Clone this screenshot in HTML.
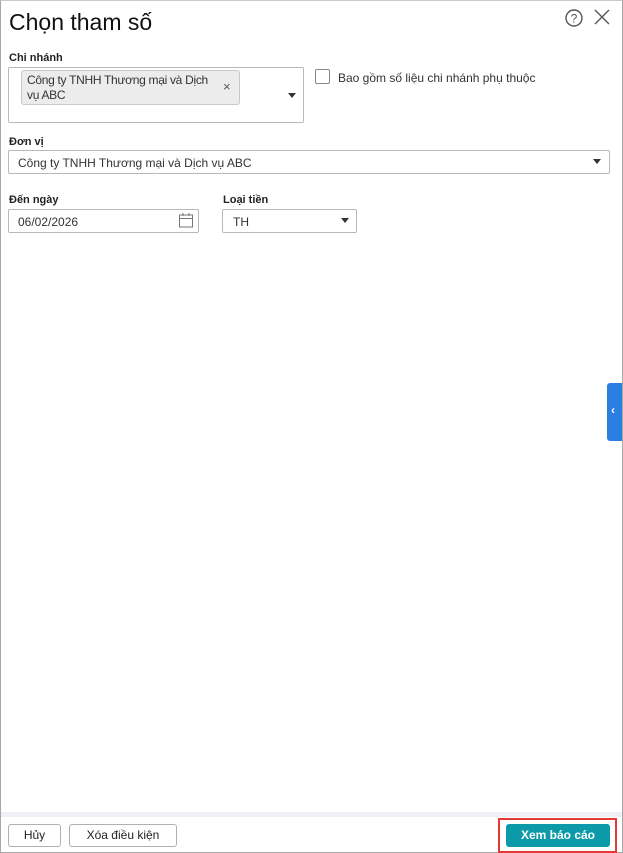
<!DOCTYPE html>
<html><head><meta charset="utf-8"><style>
*{box-sizing:border-box;margin:0;padding:0}
body{width:623px;height:853px;background:#fff;font-family:"Liberation Sans",sans-serif;color:#212121;position:relative;overflow:hidden}
.frame{position:absolute;left:0;top:0;width:623px;height:853px;border:1px solid #a8a8a8;border-top-color:#c8c8c8}
.abs{position:absolute}
h1{position:absolute;left:9px;top:9px;font-size:23px;font-weight:normal;color:#111}
.lbl{position:absolute;font-size:11px;font-weight:bold;color:#222}
.box{position:absolute;border:1px solid #b8b8b8;border-radius:2px;background:#fff}
.arrow{position:absolute;width:0;height:0;border-left:4px solid transparent;border-right:4px solid transparent;border-top:5px solid #333}
.txt{position:absolute;font-size:12px;color:#333;white-space:nowrap}
.btn{position:absolute;border:1px solid #b0b0b0;border-radius:3px;background:#fff;font-size:12px;text-align:center;line-height:21px;color:#222}
</style></head><body>
<div class="frame"></div>
<h1>Chọn tham số</h1>
<svg class="abs" style="left:564px;top:8px" width="20" height="20"><circle cx="10" cy="10" r="8" fill="none" stroke="#555" stroke-width="1.4"/><text x="10" y="14.5" font-size="12" text-anchor="middle" fill="#555" font-family="Liberation Sans">?</text></svg>
<svg class="abs" style="left:593px;top:8px" width="18" height="18"><path d="M2 2L16 16M16 2L2 16" stroke="#555" stroke-width="1.4"/></svg>

<div class="lbl" style="left:9px;top:52px">Chi nhánh</div>
<div class="box" style="left:8px;top:67px;width:296px;height:56px"></div>
<div class="abs" style="left:21px;top:70px;width:219px;height:35px;background:#ececec;border:1px solid #c8c8c8;border-radius:3px"></div>
<div class="txt" style="left:27px;top:73px;line-height:15px;letter-spacing:-0.3px">Công ty TNHH Thương mại và Dịch<br>vụ ABC</div>
<div class="txt" style="left:223px;top:79px;font-size:13px;color:#555">×</div>
<div class="arrow" style="left:288px;top:93px"></div>
<div class="box" style="left:315px;top:69px;width:15px;height:15px;border-color:#888"></div>
<div class="txt" style="left:338px;top:71px">Bao gồm số liệu chi nhánh phụ thuộc</div>

<div class="lbl" style="left:9px;top:136px">Đơn vị</div>
<div class="box" style="left:8px;top:150px;width:602px;height:24px"></div>
<div class="txt" style="left:18px;top:156px">Công ty TNHH Thương mại và Dịch vụ ABC</div>
<div class="arrow" style="left:593px;top:159px"></div>

<div class="lbl" style="left:9px;top:194px">Đến ngày</div>
<div class="box" style="left:8px;top:209px;width:191px;height:24px"></div>
<div class="txt" style="left:18px;top:215px">06/02/2026</div>
<svg class="abs" style="left:178px;top:212px" width="16" height="17"><rect x="1.5" y="3" width="13" height="12" fill="none" stroke="#777"/><path d="M1.5 6.5H14.5M5 1V4M11 1V4" stroke="#777"/></svg>
<div class="lbl" style="left:223px;top:194px">Loại tiền</div>
<div class="box" style="left:222px;top:209px;width:135px;height:24px"></div>
<div class="txt" style="left:233px;top:215px">TH</div>
<div class="arrow" style="left:341px;top:218px"></div>

<div class="abs" style="left:607px;top:383px;width:15px;height:58px;background:#2b7fe0;border-radius:3px 0 0 3px"></div>
<div class="abs" style="left:611px;top:403px;color:#fff;font-size:12px;font-weight:bold">‹</div>

<div class="abs" style="left:1px;top:812px;width:621px;height:5px;background:#eef0f3"></div>
<div class="btn" style="left:8px;top:824px;width:53px;height:23px">Hủy</div>
<div class="btn" style="left:69px;top:824px;width:108px;height:23px">Xóa điều kiện</div>
<div class="abs" style="left:498px;top:818px;width:119px;height:35px;border:2px solid #e53935"></div>
<div class="abs" style="left:506px;top:824px;width:104px;height:23px;background:#0c9aa8;border-radius:3px;color:#fff;font-size:12px;font-weight:bold;text-align:center;line-height:23px">Xem báo cáo</div>
</body></html>
